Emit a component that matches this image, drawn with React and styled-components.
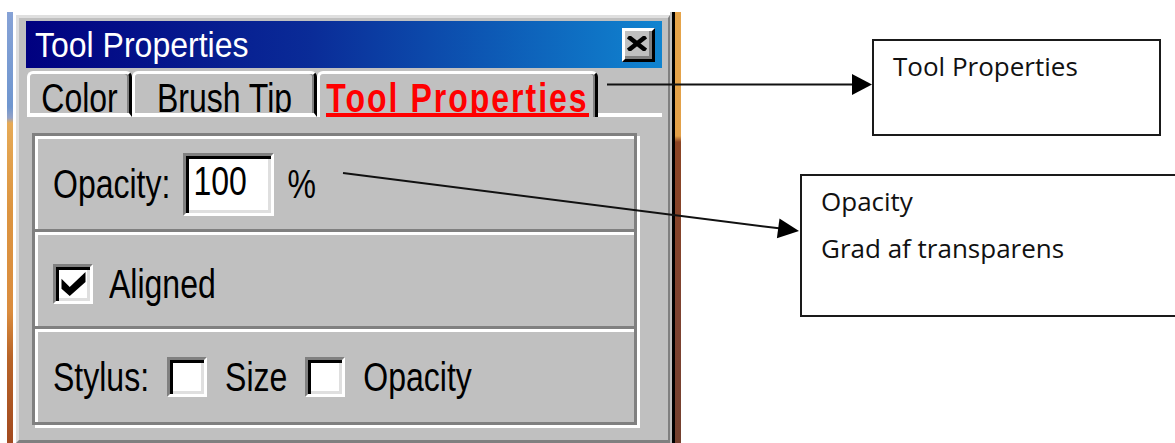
import React from 'react'
import styled, { createGlobalStyle } from 'styled-components'

const GlobalStyle = createGlobalStyle`
  html, body {
    margin: 0;
    padding: 0;
    background: #fff;
  }
  body {
    overflow: hidden;
  }
`

const tabs = [
  { label: 'Color', width: 105 },
  { label: 'Brush Tip', width: 185 },
  { label: 'Tool Properties', width: 281, active: true },
]

const App = () => {
  return (
    <Page>
      <GlobalStyle />
      <Strip $bg="linear-gradient(to bottom, #86a2d6 0, #6f96cf 95px, #94a2c6 106px, #e6aa56 111px, #dc9440 200px, #da8c3e 300px, #b86428 345px, #a24a20 431px)" />
      <Window>
        <TitleBar>
          <TitleText>Tool Properties</TitleText>
          <CloseButton>
            <svg width="20" height="15" viewBox="0 0 20 15">
              <path d="M3 2 L17 13 M17 2 L3 13" stroke="#000" strokeWidth="4.5" strokeLinecap="square" />
            </svg>
          </CloseButton>
        </TitleBar>

        <TabStrip>
          {tabs.map((t) =>
            t.active ? (
              <Tab key={t.label} $w={t.width} $active>
                <Underline>
                  <TabLabel $active>{t.label}</TabLabel>
                </Underline>
              </Tab>
            ) : (
              <Tab key={t.label} $w={t.width}>
                <TabLabel>{t.label}</TabLabel>
              </Tab>
            )
          )}
          <TabFiller />
        </TabStrip>

        <Panel>
          <Section $h={96} $pt={3} $gap={13} $first>
            <Text>Opacity:</Text>
            <Field>
              <Text>100</Text>
            </Field>
            <Text>%</Text>
          </Section>
          <Section $h={97} $pt={6} $gap={16}>
            <Check>
              <svg width="25" height="24" viewBox="0 0 7 7">
                <polygon points="0,2 2.4,4.4 7,0 7,2.9 2.4,7 0,4.9" fill="#000" />
              </svg>
            </Check>
            <Text>Aligned</Text>
          </Section>
          <Section $h={93} $pt={0} $gap={18} $last>
            <Text>Stylus:</Text>
            <Check />
            <Text>Size</Text>
            <Check />
            <Text>Opacity</Text>
          </Section>
        </Panel>
      </Window>
      <Edge />
      <Strip $bg="linear-gradient(to bottom, #e6a44a 0, #e2a048 124px, #8c4424 130px, #7e4230 300px, #74402e 431px)" />

      <Notes>
        <Callout $w={289} $h={97} $ml={191} $mt={27}>
          <div>Tool Properties</div>
        </Callout>
        <Callout $w={430} $h={143} $ml={119} $mt={38}>
          <div>Opacity</div>
          <div>Grad af transparens</div>
        </Callout>
      </Notes>

      <Arrows width="1175" height="443" viewBox="0 0 1175 443">
        <line x1="607" y1="84.5" x2="854" y2="84.5" stroke="#111" strokeWidth="2" />
        <polygon points="852,74 872,84.5 852,95" fill="#000" />
        <line x1="343" y1="173" x2="781" y2="228.6" stroke="#111" strokeWidth="2" />
        <polygon points="779.5,218.4 799,231 776.9,238.3" fill="#000" />
      </Arrows>
    </Page>
  )
}

export default App

const Page = styled.div`
  position: relative;
  box-sizing: border-box;
  width: 1175px;
  height: 443px;
  padding: 12px 0 0 7px;
  display: flex;
  align-items: flex-start;
  overflow: hidden;
  font-family: "Liberation Sans", Arial, sans-serif;
`
const Strip = styled.div`
  flex: none;
  width: 6px;
  align-self: stretch;
  background: ${(p) => p.$bg};
`
const Edge = styled.div`
  flex: none;
  width: 3px;
  align-self: stretch;
  background: #000;
  border-left: 2px solid #c0c0c0;
`
const Window = styled.div`
  flex: none;
  box-sizing: border-box;
  width: 654px;
  margin: 3px 0 0 3px;
  padding: 3px 6px 15px 7px;
  background: #c0c0c0;
  border-style: solid;
  border-width: 3px 2px 3px 3px;
  border-color: #dfdfdf #808080 #808080 #dfdfdf;
`
const TitleBar = styled.div`
  height: 47px;
  display: flex;
  align-items: center;
  justify-content: space-between;
  padding: 0 7px 0 9px;
  background: linear-gradient(90deg, #000080 0%, #0a2c98 45%, #1084d0 100%);
`
const TitleText = styled.span`
  display: inline-block;
  color: #fff;
  font-size: 32px;
  line-height: 32px;
  transform: scaleY(1.1);
  white-space: nowrap;
`
const CloseButton = styled.div`
  box-sizing: border-box;
  width: 33px;
  height: 34px;
  display: flex;
  align-items: center;
  justify-content: center;
  padding: 0 3px 3px 0;
  background: #c0c0c0;
  border-style: solid;
  border-width: 3px;
  border-color: #fff #000 #000 #fff;
  box-shadow: inset -3px -3px 0 #808080;
`
const TabStrip = styled.div`
  display: flex;
  align-items: flex-end;
  height: 46px;
  margin: 3px 0 0 1px;
`
const Tab = styled.div`
  flex: none;
  box-sizing: border-box;
  width: ${(p) => p.$w}px;
  height: 46px;
  display: flex;
  align-items: flex-end;
  justify-content: center;
  border-top: 3px solid #fff;
  border-left: 3px solid #fff;
  border-right: 3px solid #000;
  border-bottom: ${(p) => (p.$active ? 'none' : '4px solid #fff')};
  border-radius: 6px 6px 0 0;
  box-shadow: inset -2px 0 0 #808080;
`
const Underline = styled.div`
  border-bottom: 4px solid #ff0000;
`
const TabLabel = styled.span`
  display: block;
  box-sizing: border-box;
  height: 25px;
  padding-top: 2px;
  line-height: 23px;
  overflow: hidden;
  font-size: 32px;
  font-weight: ${(p) => (p.$active ? 700 : 400)};
  letter-spacing: ${(p) => (p.$active ? '2px' : '0')};
  color: ${(p) => (p.$active ? '#ff0000' : '#000')};
  transform: scaleY(1.25);
  transform-origin: 50% 100%;
  white-space: nowrap;
`
const TabFiller = styled.div`
  flex: 1;
  border-bottom: 4px solid #fff;
`
const Panel = styled.div`
  box-sizing: border-box;
  width: 605px;
  margin: 16px 0 0 6px;
  border: 3px solid #808080;
  box-shadow: inset 3px 3px 0 #fff, 3px 3px 0 #fff;
`
const Section = styled.div`
  box-sizing: border-box;
  height: ${(p) => p.$h}px;
  display: flex;
  align-items: center;
  gap: ${(p) => p.$gap}px;
  padding: ${(p) => p.$pt}px 0 0 18px;
  border-top: ${(p) => (p.$first ? 'none' : '3px solid #fff')};
  border-bottom: ${(p) => (p.$last ? 'none' : '3px solid #808080')};
`
const Text = styled.span`
  display: inline-block;
  font-size: 32px;
  line-height: 32px;
  color: #000;
  transform: scaleY(1.25);
  white-space: nowrap;
`
const Field = styled.div`
  box-sizing: border-box;
  width: 91px;
  height: 63px;
  display: flex;
  align-items: center;
  padding: 0 0 6px 7px;
  background: #fff;
  border-style: solid;
  border-width: 3px;
  border-color: #808080 #fff #fff #808080;
  box-shadow: inset 3px 3px 0 #000, inset -3px -3px 0 #dfdfdf;
`
const Check = styled.div`
  flex: none;
  box-sizing: border-box;
  width: 40px;
  height: 40px;
  display: flex;
  align-items: center;
  justify-content: center;
  background: #fff;
  border-style: solid;
  border-width: 3px;
  border-color: #808080 #fff #fff #808080;
  box-shadow: inset 3px 3px 0 #000, inset -3px -3px 0 #dfdfdf;
`
const Notes = styled.div`
  display: flex;
  flex-direction: column;
  align-items: flex-start;
`
const Callout = styled.div`
  flex: none;
  box-sizing: border-box;
  width: ${(p) => p.$w}px;
  height: ${(p) => p.$h}px;
  margin: ${(p) => p.$mt}px 0 0 ${(p) => p.$ml}px;
  padding: 2px 0 0 19px;
  border: 2px solid #1a1a1a;
  font-family: "Open Sans", "Noto Sans", sans-serif;
  font-size: 26px;
  line-height: 47px;
  color: #111;
  white-space: nowrap;
`
const Arrows = styled.svg`
  position: absolute;
  top: 0;
  left: 0;
  pointer-events: none;
`
